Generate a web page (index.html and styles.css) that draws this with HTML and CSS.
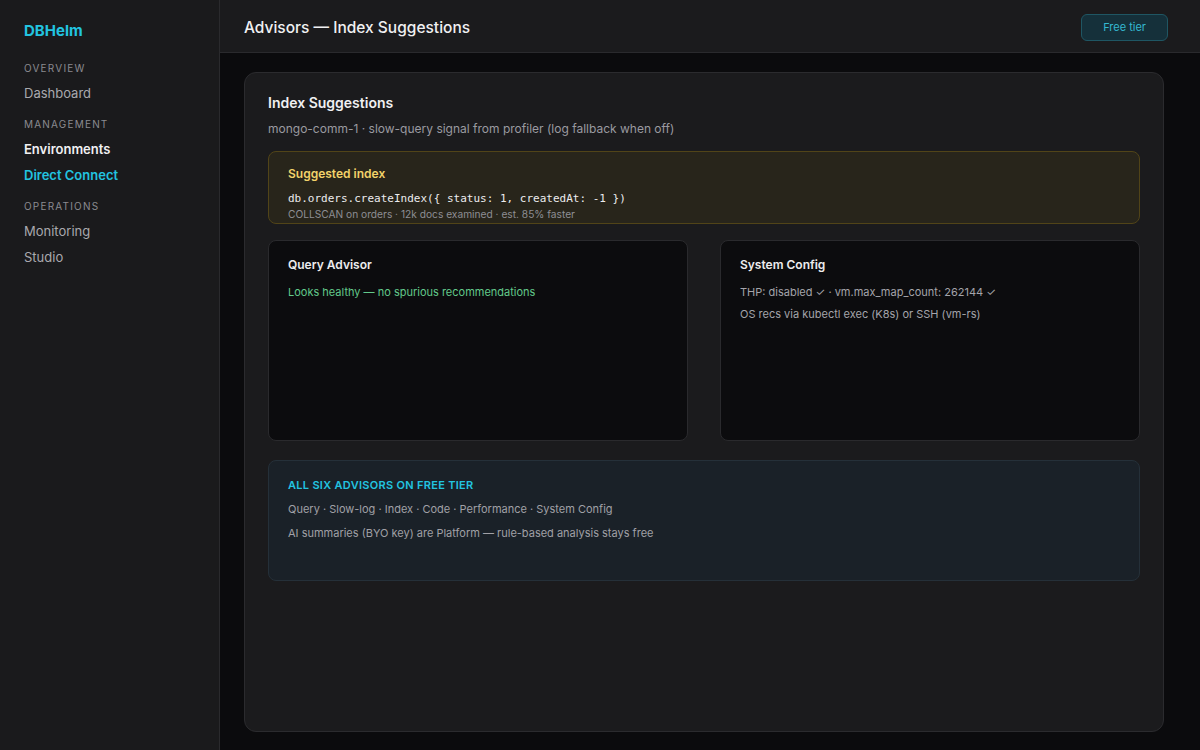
FILE: index.html
```html
<!DOCTYPE html>
<html>
<head>
    <title>DBHelm — Advisors</title>
    <link rel="stylesheet" href="styles.css">
</head>
<body>
    <div class="app">
        <aside class="sidebar">
            <div class="brand">DBHelm</div>

            <div class="nav-group">OVERVIEW</div>
            <a class="nav-item">Dashboard</a>

            <div class="nav-group">MANAGEMENT</div>
            <a class="nav-item strong">Environments</a>
            <a class="nav-item active">Direct Connect</a>

            <div class="nav-group">OPERATIONS</div>
            <a class="nav-item">Monitoring</a>
            <a class="nav-item">Studio</a>
        </aside>

        <div class="main">
            <header class="topbar">
                <h1 class="page-title">Advisors — Index Suggestions</h1>
                <button class="tier-button">Free tier</button>
            </header>

            <div class="content">
                <section class="panel">
                    <h2 class="panel-title">Index Suggestions</h2>
                    <p class="panel-sub">mongo-comm-1 · slow-query signal from profiler (log fallback when off)</p>

                    <div class="suggest">
                        <div class="suggest-title">Suggested index</div>
                        <code class="suggest-code">db.orders.createIndex({ status: 1, createdAt: -1 })</code>
                        <div class="suggest-meta">COLLSCAN on orders · 12k docs examined · est. 85% faster</div>
                    </div>

                    <div class="cards">
                        <div class="card">
                            <h3 class="card-title">Query Advisor</h3>
                            <p class="card-line ok">Looks healthy — no spurious recommendations</p>
                        </div>
                        <div class="card">
                            <h3 class="card-title">System Config</h3>
                            <p class="card-line">THP: disabled ✓ · vm.max_map_count: 262144 ✓</p>
                            <p class="card-line">OS recs via kubectl exec (K8s) or SSH (vm-rs)</p>
                        </div>
                    </div>

                    <div class="note">
                        <div class="note-title">ALL SIX ADVISORS ON FREE TIER</div>
                        <p class="note-line">Query · Slow-log · Index · Code · Performance · System Config</p>
                        <p class="note-line">AI summaries (BYO key) are Platform — rule-based analysis stays free</p>
                    </div>
                </section>
            </div>
        </div>
    </div>
</body>
</html>
```

FILE: styles.css
```css
* {
    box-sizing: border-box;
    font-family: 'Inter', 'Liberation Sans', Arial, sans-serif;
}

body {
    margin: 0;
    background-color: #0b0b0d;
    color: #e6e6e8;
}

.app {
    display: flex;
    height: 750px;
}

/* Barra lateral */
.sidebar {
    width: 220px;
    flex-shrink: 0;
    background-color: #1a1a1c;
    border-right: 1px solid #2a2a2d;
    padding: 21px 24px;
    display: flex;
    flex-direction: column;
}

.brand {
    color: #22c4e0;
    font-size: 15px;
    font-weight: 700;
    line-height: 20px;
    margin-bottom: 9px;
}

.nav-group {
    color: #8a8a90;
    font-size: 10px;
    letter-spacing: 1.2px;
    line-height: 14px;
    margin-top: 11px;
    margin-bottom: 5px;
}

.nav-item {
    color: #a9a9ae;
    font-size: 13px;
    line-height: 18px;
    padding: 4px 0;
    text-decoration: none;
}

.nav-item.strong {
    color: #f0f0f2;
    font-weight: 600;
}

.nav-item.active {
    color: #22c4e0;
    font-weight: 600;
}

/* Contenido principal */
.main {
    flex: 1;
    display: flex;
    flex-direction: column;
}

.topbar {
    height: 53px;
    background-color: #1b1b1d;
    border-bottom: 1px solid #2a2a2d;
    display: flex;
    align-items: center;
    justify-content: space-between;
    padding: 0 32px 0 24px;
}

.page-title {
    margin: 2px 0 0;
    font-size: 15.5px;
    font-weight: 500;
    color: #f0f0f2;
}

.tier-button {
    background-color: #15303a;
    border: 1px solid #1f5663;
    border-radius: 6px;
    color: #34b8d0;
    font-size: 11px;
    padding: 0 21px;
    height: 27px;
    margin-top: 2px;
}

.content {
    flex: 1;
    padding: 19px 36px 18px 24px;
    display: flex;
}

.panel {
    flex: 1;
    background-color: #1b1b1d;
    border: 1px solid #2b2b2e;
    border-radius: 12px;
    padding: 20px 23px;
}

.panel-title {
    margin: 0;
    font-size: 14px;
    font-weight: 600;
    color: #f0f0f2;
    line-height: 20px;
}

.panel-sub {
    margin: 8px 0 14px;
    font-size: 12px;
    color: #9a9aa0;
    line-height: 16px;
}

.suggest {
    height: 73px;
    overflow: hidden;
    background-color: #28251b;
    border: 1px solid #514418;
    border-radius: 8px;
    padding: 14px 19px;
    display: flex;
    flex-direction: column;
}

.suggest-title {
    color: #f2d26a;
    font-size: 12px;
    font-weight: 600;
    line-height: 16px;
    margin-bottom: 9px;
}

.suggest-code {
    font-family: 'DejaVu Sans Mono', 'Liberation Mono', monospace;
    font-size: 11px;
    color: #ececee;
    line-height: 16px;
}

.suggest-meta {
    color: #8e8e94;
    font-size: 10.2px;
    line-height: 14px;
}

.cards {
    display: grid;
    grid-template-columns: 1fr 1fr;
    gap: 32px;
    margin-top: 16px;
}

.card {
    height: 201px;
    background-color: #0c0c0e;
    border: 1px solid #2a2a2d;
    border-radius: 8px;
    padding: 15px 19px;
}

.card-title {
    margin: 0 0 10px;
    font-size: 12px;
    font-weight: 600;
    color: #ececee;
    line-height: 18px;
}

.card-line {
    margin: 0 0 6px;
    font-size: 11px;
    line-height: 16px;
    color: #a4a4aa;
}

.card-line.ok {
    color: #62c98a;
}

.note {
    height: 121px;
    margin-top: 19px;
    background-color: #1a2128;
    border: 1px solid #253039;
    border-radius: 8px;
    padding: 16px 19px;
}

.note-title {
    color: #22c4e0;
    font-size: 11px;
    font-weight: 600;
    letter-spacing: 0.3px;
    line-height: 16px;
    margin-bottom: 8px;
}

.note-line {
    margin: 0 0 8px;
    font-size: 11px;
    line-height: 16px;
    color: #a0a0a6;
}
```
